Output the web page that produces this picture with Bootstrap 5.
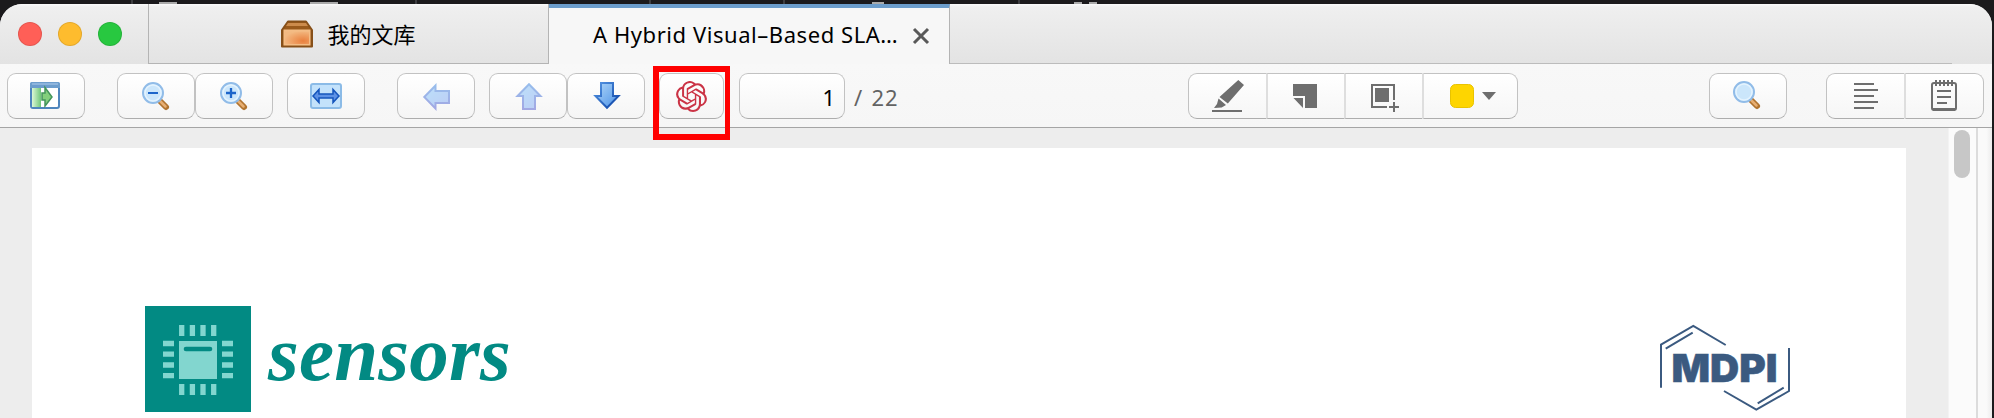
<!DOCTYPE html>
<html lang="zh-CN">
<head>
<meta charset="utf-8">
<meta name="viewport" content="width=device-width, initial-scale=1">
<title>A Hybrid Visual-Based SLAM</title>
<link href="https://cdn.jsdelivr.net/npm/bootstrap@5.3.0/dist/css/bootstrap.min.css" rel="stylesheet">
<style>
  body { background: #1b1a1c; height: 418px; font-family: "Noto Sans", "Noto Sans CJK SC", sans-serif; color: #000; }
  svg { display: block; }
  .desk { height: 4px; }
  .app-window { width: 1992px; height: 414px; border-radius: 22px 22px 0 0; background: #f7f7f7; }
  .titlebar { height: 60px; background: linear-gradient(#fafafa 0, #efefef 3px, #e3e3e3 100%); }
  .lights { width: 148px; padding-left: 18px; gap: 16px; padding-bottom: 1px; }
  .light { width: 24px; height: 24px; border-radius: 50%; border: 1px solid rgba(0,0,0,.1); }
  .l-red { background: #ff5f57; } .l-amber { background: #febc2e; } .l-green { background: #28c840; }
  .tab-box { width: 401px; font-size: 22px; line-height: 30px; border: 0 solid #b4b4b4; }
  .tab-lib { border-width: 0 1px 1px 1px; gap: 14px; padding-bottom: 0; }
  .tab-doc { width: 401px; background: #f7f7f7; border-top: 4px solid #6c9dcb; border-right: 1px solid #b4b4b4; padding-left: 44px; }
  .tab-doc span { width: 319px; letter-spacing: .56px; white-space: nowrap; padding-bottom: 4px; }
  .tab-rest { border-bottom: 1px solid #bcbcbc; margin-right: 40px; }
  .toolbar { height: 64px; padding: 9px 8px 0 7px; border-bottom: 1px solid #a5a5a5; background: linear-gradient(#f8f8f8, #f6f6f6); }
  .tool { width: 78px; height: 46px; padding: 0; border: 1px solid #c2c2c2; border-bottom-color: #adadad; border-radius: 9px; background: linear-gradient(#fff, #f5f5f5); flex: none; }
  .gpt { width: 65px; }
  .sp14 { margin-left: 14px; } .sp32 { margin-left: 32px; }
  .page-no { width: 106px; margin-left: 15px; text-align: right; padding: 6px 9px 0; font-size: 22px; line-height: 34px; }
  .page-total { margin-left: 9px; font-size: 22px; line-height: 34px; padding-top: 7px; color: #636363; letter-spacing: .8px; word-spacing: 2px; width: 66px; }
  .marks .tool { border-radius: 0; border-width: 1px 0; background: linear-gradient(#fff, #f6f6f6); }
  .marks .tool + .tool { border-left: 2px solid #dedede; }
  .marks .tool:first-child { border-left: 1px solid #c2c2c2; border-radius: 9px 0 0 9px; }
  .marks .tool:last-child { border-right: 1px solid #c2c2c2; border-radius: 0 9px 9px 0; width: 80px; }
  .marks .swatch-tool:last-child { width: 96px; }
  .marks-a { margin-left: 268px; }
  .find { margin-left: 191px; }
  .marks-b { margin-left: 39px; }
  .ring { left: 653px; top: 66px; width: 77px; height: 74px; border: 6px solid #f00; border-right-width: 5px; }
  .viewer { background: #ededed; min-height: 0; }
  .sheet { margin: 20px 42px 0 32px; padding: 158px 113px 0 113px; background: #fff; }
  .chip { width: 106px; height: 106px; background: #028a83; }
  .journal { font: italic bold 79px/80px "Liberation Serif", serif; color: #028a83; margin: 8px 0 0 17px; letter-spacing: .2px; }
  .publisher { margin: 4px -17px 0 auto; }
  .track { width: 28px; background: #fbfbfb; padding: 2px 0 0 5px; border-left: 1px solid #f3f3f3; }
  .thumb { width: 16px; height: 48px; border-radius: 8px; background: #c7c7c7; }
  .side { width: 16px; border-left: 2px solid #dcdcdc; background: linear-gradient(90deg, #fafafa 60%, #ececec); }
</style>
</head>
<body class="overflow-hidden">
<svg class="desk" width="1994" height="4"><path d="M132 0v4M416 0v4M650 0v4M784 0v4M1019 0v4" stroke="#3d3d40" stroke-width="2"/><path d="M159 3h18M310 3h28M872 3h12M1074 3h8M1089 3h8" stroke="#aaa" stroke-width="2"/></svg>
<svg width="0" height="0" class="position-absolute">
  <defs>
    <linearGradient id="pale" x1="0" y1="0" x2="1" y2="1"><stop stop-color="#bce0fa"/><stop offset="1" stop-color="#bccdf5"/></linearGradient>
    <linearGradient id="blue" x1="0" y1="0" x2="1" y2="1"><stop stop-color="#b0d7f8"/><stop offset="1" stop-color="#4b91e7"/></linearGradient>
    <linearGradient id="blueEdge" x1="0" y1="0" x2="1" y2="1"><stop stop-color="#5596e4"/><stop offset="1" stop-color="#0b42a5"/></linearGradient>
    <linearGradient id="paleEdge" x1="0" y1="0" x2="0" y2="1"><stop stop-color="#98bdec"/><stop offset="1" stop-color="#a2a8e3"/></linearGradient>
    <linearGradient id="green"><stop stop-color="#dcf8d5"/><stop offset="1" stop-color="#70c779"/></linearGradient>
    <radialGradient id="orange" cx=".75" cy=".75" r=".8"><stop stop-color="#e9803e"/><stop offset="1" stop-color="#f3b981"/></radialGradient>
    <g id="lens">
      <path d="M43.500 28.500L49 34" stroke="#b17430" stroke-width="6" stroke-linecap="round"/>
      <path d="M43 28L48.500 33.500" stroke="#e7ae72" stroke-width="2.500" stroke-linecap="round"/>
      <circle cx="36" cy="20" r="10" fill="#cbe6fb" stroke="#91bce8" stroke-width="2"/>
      <circle cx="36" cy="20" r="8" fill="none" stroke="#e4f3fe" stroke-width="1.500"/>
    </g>
  </defs>
</svg>
<div class="app-window d-flex flex-column overflow-hidden">
  <header class="titlebar d-flex flex-shrink-0">
    <div class="lights d-flex align-items-center"><span class="light l-red"></span><span class="light l-amber"></span><span class="light l-green"></span></div>
    <div class="tab-box tab-lib d-flex align-items-center justify-content-center">
      <svg width="32" height="28" viewBox="0 0 32 28"><path d="M1 10L7 1.500H25L31 10V26.500H1Z" fill="#9a5a1b" stroke="#875019" stroke-width="2" stroke-linejoin="round"/><path d="M7 3H25L27 6H5Z" fill="#cc8b4b"/><path d="M2.500 9.500H29.500V25.500H2.500Z" fill="#f4bd86"/><path d="M4 11.500H28V24H4Z" fill="url(#orange)"/></svg>
      <span>我的文库</span>
    </div>
    <div class="tab-box tab-doc d-flex align-items-center"><span>A Hybrid Visual–Based SLA…</span>
      <svg width="18" height="18" viewBox="0 0 18 18"><path d="M2 2L16 16M16 2L2 16" stroke="#595959" stroke-width="3"/></svg>
    </div>
    <div class="tab-rest flex-grow-1"></div>
  </header>
  <nav class="toolbar d-flex flex-shrink-0">
    <button class="tool"><svg width="76" height="44" viewBox="1 1 76 44"><rect x="24" y="10" width="28" height="25" rx="2" fill="#fff" stroke="#4f86bd" stroke-width="2"/><path d="M23 15V11Q23 9 25 9H51Q53 9 53 11V15Z" fill="#6c9dcd"/><path d="M25 11H51" stroke="#98bce0" stroke-width="1.500"/><path d="M25 15H34V34H25Z" fill="url(#green)"/><path d="M35 20H38V14.500L45 24L38 33V27H35Z" fill="#83cf7c" stroke="#44955b" stroke-width="1.500"/></svg></button>
    <button class="tool sp32"><svg width="76" height="44" viewBox="1 1 76 44"><use href="#lens"/><path d="M31 20H41" stroke="#1c65ca" stroke-width="2"/></svg></button>
    <button class="tool"><svg width="76" height="44" viewBox="1 1 76 44"><use href="#lens"/><path d="M31 20H41M36 15V25" stroke="#1c65ca" stroke-width="2.300"/></svg></button>
    <button class="tool sp14"><svg width="76" height="44" viewBox="1 1 76 44"><rect x="24" y="11" width="30" height="24" rx="2" fill="#c3e2fb" stroke="#8bbbe7" stroke-width="2"/><path d="M26 23L32 16.500V21H46V16.500L52 23L46 29.500V25H32V29.500Z" fill="#5c91e5" stroke="#1555bc" stroke-width="1.500"/></svg></button>
    <button class="tool sp32"><svg width="76" height="44" viewBox="1 1 76 44"><path d="M27.300 24L38.500 12.500V18H52V30H38.500V35.500Z" fill="url(#pale)" stroke="url(#paleEdge)" stroke-width="2"/></svg></button>
    <button class="tool sp14"><svg width="76" height="44" viewBox="1 1 76 44"><path d="M40 11.300L51.500 23H46V36H34V23H28.500Z" fill="url(#pale)" stroke="url(#paleEdge)" stroke-width="2"/></svg></button>
    <button class="tool"><svg width="76" height="44" viewBox="1 1 76 44"><path d="M34 10H46V23H51.500L40 34.700L28.500 23H34Z" fill="url(#blue)" stroke="url(#blueEdge)" stroke-width="2"/></svg></button>
    <button class="tool gpt sp14 d-flex align-items-center justify-content-center"><svg width="31" height="31" viewBox="0 0 24 24" fill="#cb3446"><path d="M22.2819 9.8211a5.9847 5.9847 0 0 0-.5157-4.9108 6.0462 6.0462 0 0 0-6.5098-2.9A6.0651 6.0651 0 0 0 4.9807 4.1818a5.9847 5.9847 0 0 0-3.9977 2.9 6.0462 6.0462 0 0 0 .7427 7.0966 5.98 5.98 0 0 0 .511 4.9107 6.051 6.051 0 0 0 6.5146 2.9001A5.9847 5.9847 0 0 0 13.2599 24a6.0557 6.0557 0 0 0 5.7718-4.2058 5.9894 5.9894 0 0 0 3.9977-2.9001 6.0557 6.0557 0 0 0-.7475-7.0729zm-9.022 12.6081a4.4755 4.4755 0 0 1-2.8764-1.0408l.1419-.0804 4.7783-2.7582a.7948.7948 0 0 0 .3927-.6813v-6.7369l2.02 1.1686a.071.071 0 0 1 .038.052v5.5826a4.504 4.504 0 0 1-4.4945 4.4944zm-9.6607-4.1254a4.4708 4.4708 0 0 1-.5346-3.0137l.142.0852 4.783 2.7582a.7712.7712 0 0 0 .7806 0l5.8428-3.3685v2.3324a.0804.0804 0 0 1-.0332.0615L9.74 19.9502a4.4992 4.4992 0 0 1-6.1408-1.6464zM2.3408 7.8956a4.485 4.485 0 0 1 2.3655-1.9728V11.6a.7664.7664 0 0 0 .3879.6765l5.8144 3.3543-2.0201 1.1685a.0757.0757 0 0 1-.071 0l-4.8303-2.7865A4.504 4.504 0 0 1 2.3408 7.872zm16.5963 3.8558L13.1038 8.364 15.1192 7.2a.0757.0757 0 0 1 .071 0l4.8303 2.7913a4.4944 4.4944 0 0 1-.6765 8.1042v-5.6772a.79.79 0 0 0-.407-.667zm2.0107-3.0231l-.142-.0852-4.7735-2.7818a.7759.7759 0 0 0-.7854 0L9.409 9.2297V6.8974a.0662.0662 0 0 1 .0284-.0615l4.8303-2.7866a4.4992 4.4992 0 0 1 6.6802 4.66zM8.3065 12.863l-2.02-1.1638a.0804.0804 0 0 1-.038-.0567V6.0742a4.4992 4.4992 0 0 1 7.3757-3.4537l-.142.0805L8.704 5.459a.7948.7948 0 0 0-.3927.6813zm1.0976-2.3654l2.602-1.4998 2.6069 1.4998v2.9994l-2.5974 1.4997-2.6067-1.4997Z"/></svg></button>
    <div class="tool page-no">1</div>
    <span class="page-total">/ 22</span>
    <div class="marks marks-a d-flex">
      <button class="tool"><svg width="77" height="44" viewBox="1 1 77 44" fill="#6e6e6e"><path d="M24 37H54V39H24ZM50.300 7L56 12L39.800 30.500L31.500 24ZM30.500 25.500L38 32L33.700 34.500L26 35L29 31Z"/></svg></button>
      <button class="tool"><svg width="76" height="44" viewBox="2 1 76 44" fill="#6e6e6e"><path d="M27 11H51V35H39V23H27ZM27.500 25H37V35Z"/></svg></button>
      <button class="tool"><svg width="76" height="44" viewBox="2 1 76 44" fill="#6e6e6e"><path d="M31 15H45V29H31Z"/><path d="M50 27V12H28V34H43M50 29V39M45 34H55" fill="none" stroke="#6e6e6e" stroke-width="2"/></svg></button>
      <button class="tool swatch-tool"><svg width="93" height="44" viewBox="1 1 93 44"><rect x="27.500" y="11.500" width="23" height="23" rx="5" fill="#fed500" stroke="#e9c300"/><path d="M59 19H73L66 27Z" fill="#6e6e6e"/></svg></button>
    </div>
    <button class="tool find"><svg width="76" height="44" viewBox="2 2 76 44"><use href="#lens"/></svg></button>
    <div class="marks marks-b d-flex">
      <button class="tool"><svg width="77" height="44" viewBox="1 1 77 44" stroke="#6e6e6e" stroke-width="2"><path d="M28 11H48M28 17H52M28 23H48M28 29H52M28 35H48"/></svg></button>
      <button class="tool"><svg width="77" height="44" viewBox="1 1 77 44" fill="none" stroke="#6e6e6e" stroke-width="2"><rect x="27" y="10" width="24" height="27" rx="2"/><path d="M28 36.500H50" stroke-width="3"/><path d="M32 18H46M32 24H46M32 30H42M31 7V13M35 7V13M39 7V13M43 7V13M47 7V13"/></svg></button>
    </div>
  </nav>
  <main class="viewer d-flex flex-grow-1">
    <article class="sheet d-flex align-items-start flex-grow-1">
      <div class="chip"><svg width="106" height="106" fill="#82d6cf"><path d="M34 35H72V73H34Z"/><path d="M41 43H65" stroke="#028a83" stroke-width="4.600" stroke-linecap="round"/><g fill="none" stroke="#82d6cf" stroke-width="5.300"><path d="M36.700 19V30M47.400 19V30M58 19V30M68.700 19V30M36.700 78V89M47.400 78V89M58 78V89M68.700 78V89M18 37.500H29M18 48.200H29M18 59H29M18 69.700H29M77 37.500H88M77 48.200H88M77 59H88M77 69.700H88"/></g></svg></div>
      <div class="journal">sensors</div>
      <svg class="publisher" width="170" height="108"><g fill="none" stroke="#3b5a80" stroke-width="2"><path d="M21 77.700V34.700L53.300 16L85.700 35M25.700 38.700L52.700 22.700M149 38V81L116.300 99.700L84 81M117.700 93.300L143.700 77.700"/></g><text x="31.500" y="72" textLength="106" lengthAdjust="spacingAndGlyphs" font-family="Inter, sans-serif" font-weight="900" font-size="38.500" fill="#3b5a80" stroke="#3b5a80" stroke-width=".5">MDPI</text></svg>
    </article>
    <div class="track"><div class="thumb"></div></div>
    <div class="side"></div>
  </main>
</div>
<div class="ring position-absolute"></div>
<script src="https://cdn.jsdelivr.net/npm/bootstrap@5.3.0/dist/js/bootstrap.bundle.min.js"></script>
</body>
</html>
